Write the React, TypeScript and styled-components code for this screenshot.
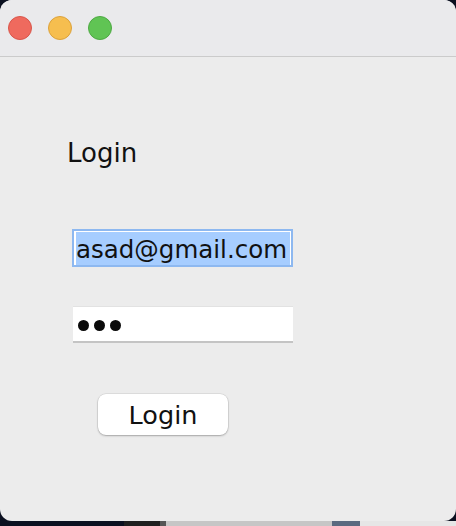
import React from 'react'
import styled, { createGlobalStyle } from 'styled-components'

const GlobalStyle = createGlobalStyle`
  html, body {
    margin: 0;
    padding: 0;
    background: #0b1020;
  }
  body {
    font-family: "DejaVu Sans", "Liberation Sans", sans-serif;
  }
`

const Desktop = styled.div`
  width: 456px;
  height: 526px;
  display: flex;
  flex-direction: column;
  background: #0b1020;
  overflow: hidden;
`

const Window = styled.div`
  width: 456px;
  height: 521px;
  flex-shrink: 0;
  border-radius: 12px;
  background: #ececec;
  overflow: hidden;
  display: flex;
  flex-direction: column;
  position: relative;
  z-index: 1;
`

const TitleBar = styled.div`
  height: 56px;
  flex-shrink: 0;
  background: #eaeaec;
  border-bottom: 1px solid #cbcbcb;
  display: flex;
  align-items: center;
  gap: 16px;
  padding-left: 8px;
`

const Light = styled.span<{ $fill: string; $edge: string }>`
  width: 24px;
  height: 24px;
  box-sizing: border-box;
  border-radius: 50%;
  background: ${p => p.$fill};
  border: 1px solid ${p => p.$edge};
`

const Content = styled.div`
  flex: 1;
  display: flex;
  flex-direction: column;
  align-items: flex-start;
  padding: 81px 0 0 72px;
`

const Heading = styled.div`
  font-size: 26px;
  line-height: 30px;
  color: #111;
  margin-left: -5px;
`

const EmailField = styled.div`
  margin-top: 61px;
  width: 221px;
  height: 38px;
  box-sizing: border-box;
  border: 2px solid #8db8f0;
  background: #fff;
  padding: 1px 1px 1px 2px;
`

const Selection = styled.div`
  height: 33px;
  background: #a6cdff;
  font-size: 24.5px;
  line-height: 35px;
  color: #111;
  white-space: nowrap;
  overflow: hidden;
`

const PasswordField = styled.div`
  margin-top: 39px;
  margin-left: 1px;
  width: 220px;
  height: 37px;
  box-sizing: border-box;
  background: #fff;
  border-top: 1px solid #e2e2e2;
  border-bottom: 2px solid #c4c4c4;
  display: flex;
  align-items: center;
  gap: 5px;
  padding: 3px 0 0 5px;
`

const Dot = styled.span`
  width: 11px;
  height: 11px;
  border-radius: 50%;
  background: #0a0a0a;
`

const LoginButton = styled.button`
  margin-top: 51px;
  margin-left: 26px;
  width: 130px;
  height: 41px;
  border: none;
  border-radius: 8px;
  background: #fff;
  box-shadow: 0 0 0 0.5px rgba(0, 0, 0, 0.12), 0 1px 2px rgba(0, 0, 0, 0.25);
  font-family: "DejaVu Sans", "Liberation Sans", sans-serif;
  font-size: 25.5px;
  line-height: 30px;
  color: #111;
  padding: 0;
`

const Dock = styled.div`
  height: 5px;
  margin-top: -12px;
  padding-top: 12px;
  display: flex;
  flex-shrink: 0;
`

const DockPart = styled.div<{ $w: number; $bg: string }>`
  width: ${p => p.$w}px;
  flex-shrink: 0;
  background: ${p => p.$bg};
`

const DockLabel = styled.div`
  flex: 1;
  background: #e6e6e6;
  font-size: 24px;
  line-height: 24px;
  color: #111;
  padding-left: 14px;
  overflow: hidden;
`

const DockLabelText = styled.div`
  margin-top: 9px;
`

const App = () => {
  return (
    <>
      <GlobalStyle />
      <Desktop>
        <Window>
          <TitleBar>
            <Light $fill='#ef6a5e' $edge='#d9564b' />
            <Light $fill='#f6be4f' $edge='#dca23c' />
            <Light $fill='#60c454' $edge='#4ea943' />
          </TitleBar>
          <Content>
            <Heading>Login</Heading>
            <EmailField>
              <Selection>asad@gmail.com</Selection>
            </EmailField>
            <PasswordField>
              <Dot />
              <Dot />
              <Dot />
            </PasswordField>
            <LoginButton type='button'>Login</LoginButton>
          </Content>
        </Window>
        <Dock>
          <DockPart $w={124} $bg='#0b1020' />
          <DockPart $w={36} $bg='#1f1f1f' />
          <DockPart $w={6} $bg='#555' />
          <DockPart $w={166} $bg='#c6c6c6' />
          <DockPart $w={28} $bg='#5a6a80' />
          <DockLabel>
            <DockLabelText>doctor</DockLabelText>
          </DockLabel>
        </Dock>
      </Desktop>
    </>
  )
}

export default App
